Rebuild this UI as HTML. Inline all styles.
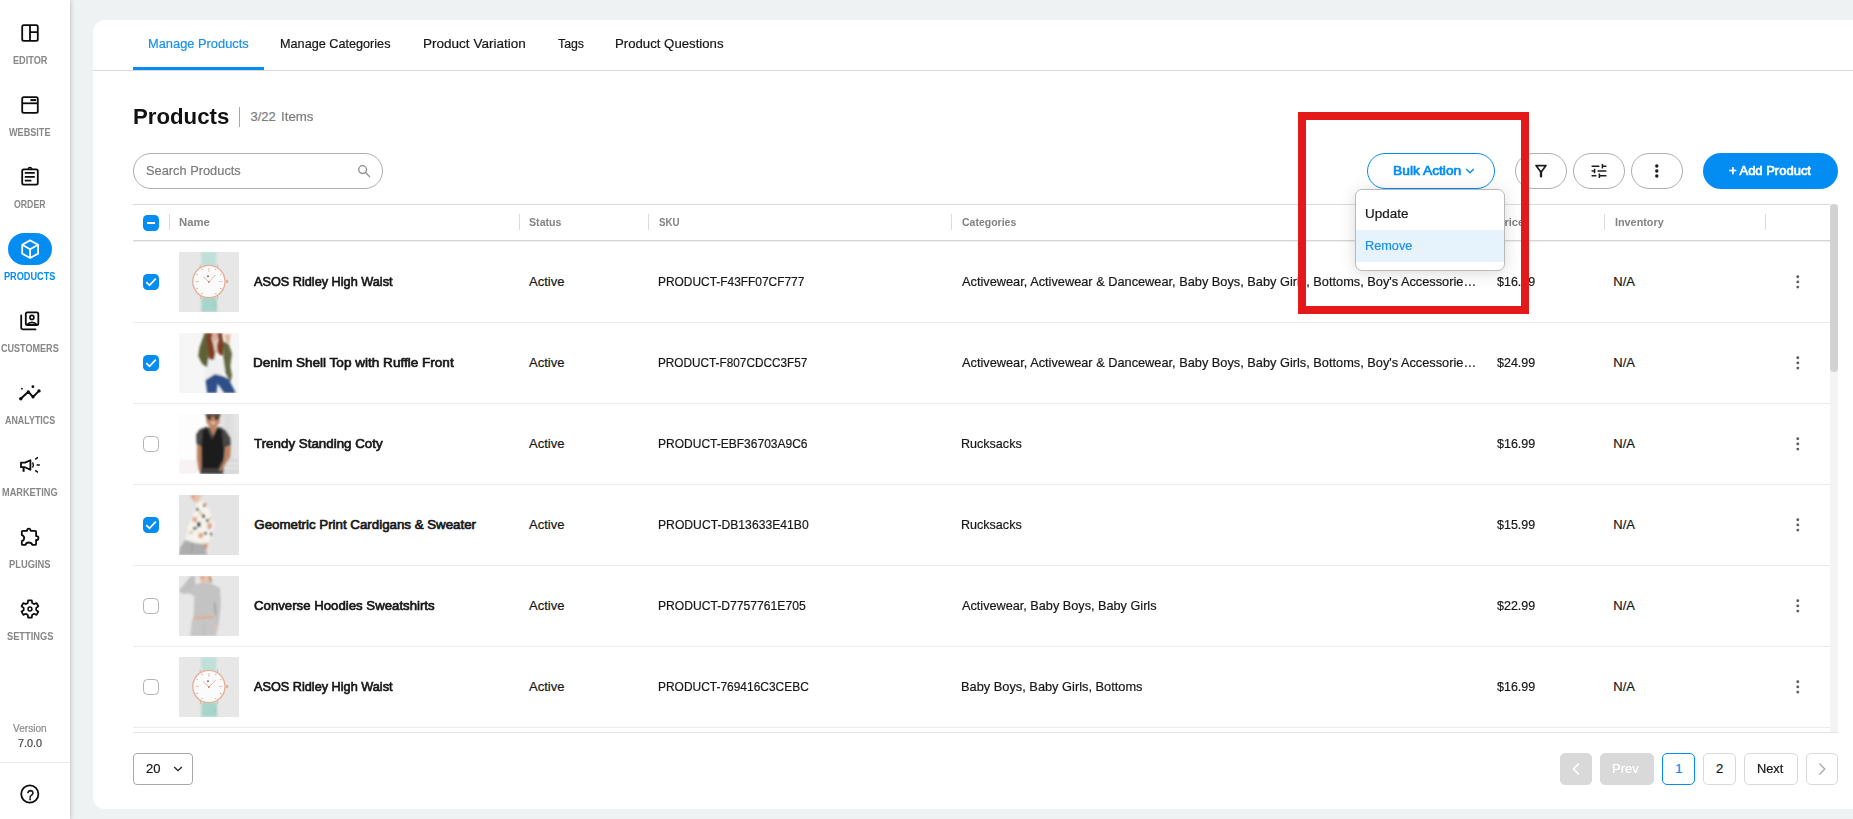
<!DOCTYPE html>
<html lang="en">
<head>
<meta charset="utf-8">
<title>Products</title>
<style>
*{box-sizing:border-box;margin:0;padding:0}
html,body{width:1853px;height:819px;overflow:hidden}
body{background:#eff2f3;font-family:"Liberation Sans",sans-serif;color:#1f1f1f;position:relative}
.a{position:absolute}
.t{position:absolute;white-space:nowrap;line-height:1;transform-origin:0 50%}
#side{position:absolute;left:0;top:0;width:70px;height:819px;background:#fff;box-shadow:1px 0 4px rgba(105,115,120,.36)}
#card{position:absolute;left:93px;top:20px;width:1780px;height:789px;background:#fff;border-radius:12px}
.hl{position:absolute;height:1px;left:133px;width:1697px}
.vs{position:absolute;width:1px;top:214px;height:16px;background:#dbdbdb}
.cb{position:absolute;left:143px;width:16px;height:16px;border-radius:4.5px}
.cb.on{background:#038cf2}
.cb.off{background:#fff;border:1px solid #b2b2b2}
.pill{position:absolute;top:153px;height:36px;border-radius:18px;border:1px solid #adadad;background:#fff}
.pg{position:absolute;top:753px;height:32px;border-radius:5px;border:1px solid #dadada;background:#fff}
.img{position:absolute;left:179px;width:60px;height:60px;overflow:hidden}
.img svg{position:static;display:block;overflow:hidden}
svg{position:absolute;overflow:visible}
</style>
</head>
<body>
<div id="card"></div>
<div class="a" style="left:93px;top:70px;width:1760px;height:1px;background:#d9d9d9"></div>
<div class="a" style="left:133px;top:67px;width:131px;height:3px;background:#038cf2"></div>
<span class="t" style="left:147.51px;top:36.6px;font-size:13px;color:#1890ee;-webkit-text-stroke:.2px;transform:scaleX(0.9882)">Manage Products</span>
<span class="t" style="left:280.33px;top:36.6px;font-size:13px;color:#171717;-webkit-text-stroke:.2px;transform:scaleX(0.9738)">Manage Categories</span>
<span class="t" style="left:422.56px;top:36.6px;font-size:13px;color:#171717;-webkit-text-stroke:.2px;transform:scaleX(1.0407)">Product Variation</span>
<span class="t" style="left:557.5px;top:36.6px;font-size:13px;color:#171717;-webkit-text-stroke:.2px;transform:scaleX(0.9478)">Tags</span>
<span class="t" style="left:614.99px;top:36.6px;font-size:13px;color:#171717;-webkit-text-stroke:.2px;transform:scaleX(1.0146)">Product Questions</span>
<span class="t" style="left:132.79px;top:105.88px;font-size:22px;color:#111;font-weight:bold;transform:scaleX(1.0094)">Products</span>
<div class="a" style="left:239px;top:107px;width:1px;height:20px;background:#a8a8a8"></div>
<span class="t" style="left:250.5px;top:110px;font-size:13px;color:#7b7b7b;-webkit-text-stroke:.2px">3/22</span>
<span class="t" style="left:280.98px;top:110px;font-size:13px;color:#7b7b7b;-webkit-text-stroke:.2px;transform:scaleX(1.0229)">Items</span>
<div class="pill" style="left:133px;width:250px"></div>
<span class="t" style="left:146px;top:163.57px;font-size:13.5px;color:#7a7a7a;-webkit-text-stroke:.2px;transform:scaleX(0.9495)">Search Products</span>
<svg class="a" style="left:357px;top:164px" width="14" height="14" viewBox="0 0 14 14" fill="none" stroke="#8a8a8a" stroke-width="1.3"><circle cx="5.6" cy="5.6" r="3.9"/><path d="M8.5 8.5L12.6 12.6" stroke-linecap="round"/></svg>
<div class="pill" style="left:1367px;width:128px;border:1.5px solid #038cf2"></div>
<span class="t" style="left:1392.76px;top:163.74px;font-size:13.3px;color:#038cf2;-webkit-text-stroke:0.67px;transform:scaleX(1.0381)">Bulk Action</span>
<svg class="a" style="left:1464px;top:166px" width="12" height="10" viewBox="0 0 12 10" fill="none" stroke="#038cf2" stroke-width="1.3"><path d="M2.2 3L6 6.8L9.8 3"/></svg>
<div class="pill" style="left:1515px;width:52px"></div>
<div class="pill" style="left:1573px;width:52px"></div>
<div class="pill" style="left:1631px;width:52px"></div>
<svg class="a" style="left:1531px;top:161px" width="20" height="20" viewBox="0 0 20 20" fill="none" stroke="#1c1c1c"><path d="M5 4.6H15L10 11.2Z" stroke-width="1.7" stroke-linejoin="round"/><path d="M10 11V15.4" stroke-width="2.3" stroke-linecap="round"/></svg>
<svg class="a" style="left:1589px;top:161px" width="20" height="20" viewBox="0 0 20 20" fill="none" stroke="#1c1c1c" stroke-width="1.5"><path d="M2.6 5.2H10.4M13.4 5.2H17.4M13.4 2.9V7.5M2.6 10H5.6M8.6 10H17.4M5.6 7.7V12.3M2.6 14.8H7.4M10.4 14.8H17.4M10.4 12.5V17.1"/></svg>
<svg class="a" style="left:1647px;top:161px" width="20" height="20" viewBox="0 0 20 20" fill="#1c1c1c"><circle cx="9.8" cy="5" r="1.7"/><circle cx="9.8" cy="10" r="1.7"/><circle cx="9.8" cy="15" r="1.7"/></svg>
<div class="a" style="left:1703px;top:153px;width:135px;height:36px;border-radius:18px;background:#038cf2"></div>
<span class="t" style="left:1729px;top:163.74px;font-size:13.3px;color:#fff;-webkit-text-stroke:0.67px;transform:scaleX(0.9771)">+ Add Product</span>
<svg class="a" width="0" height="0" style="left:0;top:0"><defs><filter id="bl" x="-5%" y="-5%" width="110%" height="110%"><feGaussianBlur stdDeviation=".8"/></filter></defs></svg>
<div class="hl" style="top:204px;background:#dadada"></div>
<div class="hl" style="top:240px;background:#d6d6d6;box-shadow:0 1px 1px rgba(0,0,0,.08)"></div>
<div class="cb on" style="top:215px"></div><div class="a" style="left:147px;top:222px;width:8px;height:2px;background:#fff"></div>
<div class="vs" style="left:169px"></div>
<div class="vs" style="left:519px"></div>
<div class="vs" style="left:648px"></div>
<div class="vs" style="left:951px"></div>
<div class="vs" style="left:1487px"></div>
<div class="vs" style="left:1604px"></div>
<div class="vs" style="left:1765px"></div>
<span class="t" style="left:179px;top:216.82px;font-size:11.2px;color:#828282;font-weight:bold;transform:scaleX(1.0083)">Name</span>
<span class="t" style="left:529.1px;top:216.82px;font-size:11.2px;color:#828282;font-weight:bold;transform:scaleX(0.9509)">Status</span>
<span class="t" style="left:658.8px;top:216.82px;font-size:11.2px;color:#828282;font-weight:bold;transform:scaleX(0.8708)">SKU</span>
<span class="t" style="left:961.5px;top:216.82px;font-size:11.2px;color:#828282;font-weight:bold;transform:scaleX(0.9392)">Categories</span>
<span class="t" style="left:1497px;top:216.82px;font-size:11.2px;color:#828282;font-weight:bold;transform:scaleX(0.9946)">Price</span>
<span class="t" style="left:1614.6px;top:216.82px;font-size:11.2px;color:#828282;font-weight:bold;transform:scaleX(0.9661)">Inventory</span>
<div class="hl" style="top:322px;background:#e8ecec"></div>
<div class="cb on" style="top:274px"></div><svg class="a" style="left:143px;top:274px" width="16" height="16" viewBox="0 0 16 16" fill="none" stroke="#fff" stroke-width="1.7"><path d="M3.300 8.100L6.500 11.300L12.800 4.600"/></svg>
<div class="img" style="top:252px"><svg width="60" height="60" viewBox="0 0 60 60"><rect width="60" height="60" fill="#e7e7e7"/><g filter="url(#bl)"><path d="M21.8 0H37.6L37.2 14H22.6Z" fill="#bfe0d8"/><path d="M22.4 45H37.8L38.2 60H22.2Z" fill="#a8d5cb"/><path d="M36 50V57" stroke="#8bbfb5" stroke-width=".8"/></g><rect x="47" y="28" width="2.2" height="3" rx=".8" fill="#dcae98"/><path d="M21.2 12.500V17M38.600 12.500V17M21.400 42V47M38.600 42V47" stroke="#e3b29c" stroke-width="1"/><circle cx="29.9" cy="29.5" r="16.8" fill="#e4b096"/><circle cx="29.9" cy="29.5" r="15.4" fill="#fbfbfb"/><path d="M29.9 30L24 24.5M29.9 30L36.5 23" stroke="#d9a58e" stroke-width=".8"/><path d="M29.9 16V20M16.5 29.5H20M40 29.5H43.5" stroke="#e3b49f" stroke-width=".8"/><rect x="28" y="23.6" width="2" height="1.2" fill="#555"/><rect x="29.1" y="29" width="1.6" height="2" fill="#c98f78"/><g fill="#b58a7c"><circle cx="36.8" cy="17.5" r=".6"/><circle cx="41.8" cy="22.6" r=".6"/><circle cx="41.8" cy="36.4" r=".6"/><circle cx="36.8" cy="41.5" r=".6"/><circle cx="23" cy="41.5" r=".6"/><circle cx="18" cy="36.4" r=".6"/><circle cx="18" cy="22.6" r=".6"/><circle cx="23" cy="17.5" r=".6"/></g></svg></div>
<span class="t" style="left:254.3px;top:274.74px;font-size:13.3px;color:#161616;-webkit-text-stroke:0.67px;transform:scaleX(0.9547)">ASOS Ridley High Waist</span>
<span class="t" style="left:529px;top:275px;font-size:13px;color:#171717;-webkit-text-stroke:.2px">Active</span>
<span class="t" style="left:657.98px;top:275px;font-size:13px;color:#171717;-webkit-text-stroke:.2px;transform:scaleX(0.9166)">PRODUCT-F43FF07CF777</span>
<span class="t" style="left:961.7px;top:275px;font-size:13px;color:#171717;-webkit-text-stroke:.2px;transform:scaleX(0.9823)">Activewear, Activewear &amp; Dancewear, Baby Boys, Baby Girls, Bottoms, Boy's Accessorie…</span>
<span class="t" style="left:1497px;top:275px;font-size:13px;color:#171717;-webkit-text-stroke:.2px;transform:scaleX(0.9613)">$16.99</span>
<span class="t" style="left:1613.3px;top:275px;font-size:13px;color:#171717;-webkit-text-stroke:.2px">N/A</span>
<svg class="a" style="left:1789px;top:273px" width="18" height="18" viewBox="0 0 18 18" fill="#5e5e5e"><circle cx="8.800" cy="3.700" r="1.450"/><circle cx="8.800" cy="8.900" r="1.450"/><circle cx="8.800" cy="14.100" r="1.450"/></svg>
<div class="hl" style="top:403px;background:#e8ecec"></div>
<div class="cb on" style="top:355px"></div><svg class="a" style="left:143px;top:355px" width="16" height="16" viewBox="0 0 16 16" fill="none" stroke="#fff" stroke-width="1.7"><path d="M3.300 8.100L6.500 11.300L12.800 4.600"/></svg>
<div class="img" style="top:333px"><svg width="60" height="60" viewBox="0 0 60 60"><rect width="60" height="60" fill="#f6f6f6"/><g filter="url(#bl)"><path d="M45 1.5L51.5 1L50.5 10.5L47 9Z" fill="#e3b8a2"/><path d="M25.6 0L20.5 14.5L19.2 23L23 30.8L29 35L29.5 20.5L30 7.7L28 0Z" fill="#5e6239"/><path d="M42.7 7.7L49.6 11.1L53 20.5L51.3 33.3L53 42.7L51.3 49.6L45.3 37.6L44.4 27.4L44.4 16.2Z" fill="#646840"/><path d="M29 27.4L35 22.5L44.4 27L46.2 37.6L42.7 42.7L35.9 41L26.5 47L24.8 41L28.2 34.2Z" fill="#f0f0f0"/><path d="M32.5 0H39.5L38.5 6.8L35.9 10.3L33.3 6.8Z" fill="#dcae98"/><path d="M33 8L38.8 8L39.5 19L35.9 22Z" fill="#e8cdbf"/><path d="M28.2 0H33.500L32.500 6L34 10L36 20L35 27L31 26.500L29.500 24L28.500 12L27.400 5Z" fill="#7e3d24"/><path d="M38.500 0H43L44.600 12L44 22.500L41 22L38.500 19L38 12L39.500 7Z" fill="#7e3d24"/><path d="M26.500 47L35.900 41L42.700 42.700L49.600 46.200L56.400 59L56.400 60H45.300L38.500 50.400L37.600 60H28.200Z" fill="#2f5088"/></g></svg></div>
<span class="t" style="left:253.28px;top:355.74px;font-size:13.3px;color:#161616;-webkit-text-stroke:0.67px;transform:scaleX(1.0194)">Denim Shell Top with Ruffle Front</span>
<span class="t" style="left:529px;top:356px;font-size:13px;color:#171717;-webkit-text-stroke:.2px">Active</span>
<span class="t" style="left:657.99px;top:356px;font-size:13px;color:#171717;-webkit-text-stroke:.2px;transform:scaleX(0.9066)">PRODUCT-F807CDCC3F57</span>
<span class="t" style="left:961.7px;top:356px;font-size:13px;color:#171717;-webkit-text-stroke:.2px;transform:scaleX(0.9823)">Activewear, Activewear &amp; Dancewear, Baby Boys, Baby Girls, Bottoms, Boy's Accessorie…</span>
<span class="t" style="left:1497px;top:356px;font-size:13px;color:#171717;-webkit-text-stroke:.2px;transform:scaleX(0.9613)">$24.99</span>
<span class="t" style="left:1613.3px;top:356px;font-size:13px;color:#171717;-webkit-text-stroke:.2px">N/A</span>
<svg class="a" style="left:1789px;top:354px" width="18" height="18" viewBox="0 0 18 18" fill="#5e5e5e"><circle cx="8.800" cy="3.700" r="1.450"/><circle cx="8.800" cy="8.900" r="1.450"/><circle cx="8.800" cy="14.100" r="1.450"/></svg>
<div class="hl" style="top:484px;background:#e8ecec"></div>
<div class="cb off" style="top:436px"></div>
<div class="img" style="top:414px"><svg width="60" height="60" viewBox="0 0 60 60"><defs><linearGradient id="mg" x1="0" x2="1" y1="0" y2="0"><stop offset=".45" stop-color="#fdfdfd"/><stop offset=".8" stop-color="#dcdcdc"/><stop offset="1" stop-color="#e6e6e6"/></linearGradient></defs><rect width="60" height="60" fill="url(#mg)"/><g filter="url(#bl)"><rect x="0" y="46" width="18" height="14" fill="#f7f2f3"/><rect x="45" y="45" width="15" height="15" fill="#d8d8d8"/><path d="M45 49.500H60M45 54H60" stroke="#f2f2f2" stroke-width="1"/><path d="M27 0H41L40.500 9L37 13H31L27.500 9Z" fill="#c48a68"/><path d="M26.500 0H41.500V2H26.500Z" fill="#2a2220"/><path d="M27.500 2.500H33L32 6H28.500ZM35 2.500H40.500L39.500 6H36Z" fill="#33302f"/><path d="M31.500 8.500H37L34 10.300Z" fill="#f4ece8"/><path d="M29.500 10L38.500 10L34 24Z" fill="#bf8463"/><path d="M20.500 15.400L27.400 12.800L31 14L34 22L38 13L42 13.500L46.200 16.200L51.300 24L51.700 31.600L46.200 33.300L45.300 46.200L44.400 60H21.400L22.200 33.300L17.500 30L17.100 20.500Z" fill="#474747"/><path d="M24 15.400L28 14L33 26L38 14.500L42.700 15.400L45.300 42.700L39.300 54.700L23 54.700L22.200 33.300Z" fill="#1f1f1f"/><path d="M17.900 30.800L22.200 32.500L22.200 54.700L19.700 58.100L17.900 46.200Z" fill="#bd815f"/><path d="M46.200 33.300L51.700 32L51.300 42.700L42.700 56.400L39.300 58.100L45.300 46.200Z" fill="#bd815f"/><path d="M21.400 56H40L44 60H21.400Z" fill="#3d3d3d"/></g></svg></div>
<span class="t" style="left:254.3px;top:436.74px;font-size:13.3px;color:#161616;-webkit-text-stroke:0.67px;transform:scaleX(1.0042)">Trendy Standing Coty</span>
<span class="t" style="left:529px;top:437px;font-size:13px;color:#171717;-webkit-text-stroke:.2px">Active</span>
<span class="t" style="left:657.98px;top:437px;font-size:13px;color:#171717;-webkit-text-stroke:.2px;transform:scaleX(0.9240)">PRODUCT-EBF36703A9C6</span>
<span class="t" style="left:960.73px;top:437px;font-size:13px;color:#171717;-webkit-text-stroke:.2px;transform:scaleX(0.9655)">Rucksacks</span>
<span class="t" style="left:1497px;top:437px;font-size:13px;color:#171717;-webkit-text-stroke:.2px;transform:scaleX(0.9613)">$16.99</span>
<span class="t" style="left:1613.3px;top:437px;font-size:13px;color:#171717;-webkit-text-stroke:.2px">N/A</span>
<svg class="a" style="left:1789px;top:435px" width="18" height="18" viewBox="0 0 18 18" fill="#5e5e5e"><circle cx="8.800" cy="3.700" r="1.450"/><circle cx="8.800" cy="8.900" r="1.450"/><circle cx="8.800" cy="14.100" r="1.450"/></svg>
<div class="hl" style="top:565px;background:#e8ecec"></div>
<div class="cb on" style="top:517px"></div><svg class="a" style="left:143px;top:517px" width="16" height="16" viewBox="0 0 16 16" fill="none" stroke="#fff" stroke-width="1.7"><path d="M3.300 8.100L6.500 11.300L12.800 4.600"/></svg>
<div class="img" style="top:495px"><svg width="60" height="60" viewBox="0 0 60 60"><rect width="60" height="60" fill="#e4e4e4"/><g filter="url(#bl)"><path d="M10.300 0H23L18.800 7.700L14.500 6.800Z" fill="#e6c0aa"/><circle cx="14.300" cy="1.800" r="1" fill="#c9452f"/><path d="M18.800 6.800L25.600 6L30.800 16.200L35.900 30.800L32.500 41L29 47.900L15.400 47.900L6.800 44.400L8.500 33.300L13.700 20.500Z" fill="#f5f3ec"/><g fill="#3b3a38"><rect x="17" y="13" width="2.500" height="3"/><rect x="24" y="9" width="3" height="2.500"/><rect x="23" y="19.500" width="3" height="3.500"/><rect x="18" y="27" width="3.500" height="5"/><rect x="27" y="24" width="2.500" height="3"/><rect x="14" y="32" width="3.500" height="2.500"/><rect x="25" y="37" width="3" height="2.500"/><rect x="29" y="30" width="2" height="4"/><rect x="31" y="37.500" width="2" height="3"/></g><g fill="#e5a78a"><rect x="13.500" y="22" width="4.500" height="5"/><rect x="28.500" y="28" width="4.500" height="5"/><rect x="19.500" y="38" width="4.500" height="5"/><rect x="24.500" y="7.500" width="3" height="3"/></g><g fill="#d9d2a6"><rect x="20" y="16" width="3" height="4"/><rect x="10" y="36" width="4" height="3"/><rect x="30" y="22" width="2.500" height="3"/></g><path d="M23 47.500L30 47.500L30.500 55L25.500 54Z" fill="#efe4dc"/><path d="M25 48.500L28 53.500M28.500 48.500L25.500 53.500" stroke="#d0553a" stroke-width="1.100"/><path d="M6 45L16.200 47.900L25.600 49.600L28.200 60H0L0.900 53Z" fill="#adadad"/><path d="M14 48L12 60" stroke="#9b9b9b" stroke-width="1"/></g></svg></div>
<span class="t" style="left:254.3px;top:517.74px;font-size:13.3px;color:#161616;-webkit-text-stroke:0.67px">Geometric Print Cardigans &amp; Sweater</span>
<span class="t" style="left:529px;top:518px;font-size:13px;color:#171717;-webkit-text-stroke:.2px">Active</span>
<span class="t" style="left:657.97px;top:518px;font-size:13px;color:#171717;-webkit-text-stroke:.2px;transform:scaleX(0.9350)">PRODUCT-DB13633E41B0</span>
<span class="t" style="left:960.73px;top:518px;font-size:13px;color:#171717;-webkit-text-stroke:.2px;transform:scaleX(0.9655)">Rucksacks</span>
<span class="t" style="left:1497px;top:518px;font-size:13px;color:#171717;-webkit-text-stroke:.2px;transform:scaleX(0.9613)">$15.99</span>
<span class="t" style="left:1613.3px;top:518px;font-size:13px;color:#171717;-webkit-text-stroke:.2px">N/A</span>
<svg class="a" style="left:1789px;top:516px" width="18" height="18" viewBox="0 0 18 18" fill="#5e5e5e"><circle cx="8.800" cy="3.700" r="1.450"/><circle cx="8.800" cy="8.900" r="1.450"/><circle cx="8.800" cy="14.100" r="1.450"/></svg>
<div class="hl" style="top:646px;background:#e8ecec"></div>
<div class="cb off" style="top:598px"></div>
<div class="img" style="top:576px"><svg width="60" height="60" viewBox="0 0 60 60"><rect width="60" height="60" fill="#e7e7e7"/><g filter="url(#bl)"><path d="M19.700 0H30.800L29.900 7.700H22.200Z" fill="#e7c3af"/><path d="M29.500 0H31.500L33 6L31 7Z" fill="#b78a5c"/><circle cx="23.600" cy="1.500" r=".9" fill="#c9402f"/><path d="M0 14.500L12 0H16.200L16.200 9.400L12 17.100L3.400 18Z" fill="#c0c0c0"/><path d="M15.400 8.500L24 6.800L32.500 7.700L41 12L41.900 29L39.300 50.400L35.900 50.400L35 39.300L14.500 41L15.400 20.500L10 17Z" fill="#c3c3c3"/><path d="M35.500 26L36.500 39" stroke="#8a8a8a" stroke-width="1"/><path d="M14.500 40.800L35 39.500L35 42.700L14.500 43.200Z" fill="#d7ad92"/><path d="M13.200 43L36 42.700L37.600 60H11.100Z" fill="#c6c6c6"/><path d="M25 47L24.500 60" stroke="#b0b0b0" stroke-width=".8"/><path d="M36.500 50L39 50.500L38.500 56L36.800 56Z" fill="#e4c2ae"/></g></svg></div>
<span class="t" style="left:254.3px;top:598.74px;font-size:13.3px;color:#161616;-webkit-text-stroke:0.67px;transform:scaleX(0.9936)">Converse Hoodies Sweatshirts</span>
<span class="t" style="left:529px;top:599px;font-size:13px;color:#171717;-webkit-text-stroke:.2px">Active</span>
<span class="t" style="left:657.97px;top:599px;font-size:13px;color:#171717;-webkit-text-stroke:.2px;transform:scaleX(0.9330)">PRODUCT-D7757761E705</span>
<span class="t" style="left:961.7px;top:599px;font-size:13px;color:#171717;-webkit-text-stroke:.2px;transform:scaleX(0.9754)">Activewear, Baby Boys, Baby Girls</span>
<span class="t" style="left:1497px;top:599px;font-size:13px;color:#171717;-webkit-text-stroke:.2px;transform:scaleX(0.9613)">$22.99</span>
<span class="t" style="left:1613.3px;top:599px;font-size:13px;color:#171717;-webkit-text-stroke:.2px">N/A</span>
<svg class="a" style="left:1789px;top:597px" width="18" height="18" viewBox="0 0 18 18" fill="#5e5e5e"><circle cx="8.800" cy="3.700" r="1.450"/><circle cx="8.800" cy="8.900" r="1.450"/><circle cx="8.800" cy="14.100" r="1.450"/></svg>
<div class="hl" style="top:727px;background:#e8ecec"></div>
<div class="cb off" style="top:679px"></div>
<div class="img" style="top:657px"><svg width="60" height="60" viewBox="0 0 60 60"><rect width="60" height="60" fill="#e7e7e7"/><g filter="url(#bl)"><path d="M21.8 0H37.6L37.2 14H22.6Z" fill="#bfe0d8"/><path d="M22.4 45H37.8L38.2 60H22.2Z" fill="#a8d5cb"/><path d="M36 50V57" stroke="#8bbfb5" stroke-width=".8"/></g><rect x="47" y="28" width="2.2" height="3" rx=".8" fill="#dcae98"/><path d="M21.2 12.500V17M38.600 12.500V17M21.400 42V47M38.600 42V47" stroke="#e3b29c" stroke-width="1"/><circle cx="29.9" cy="29.5" r="16.8" fill="#e4b096"/><circle cx="29.9" cy="29.5" r="15.4" fill="#fbfbfb"/><path d="M29.9 30L24 24.5M29.9 30L36.5 23" stroke="#d9a58e" stroke-width=".8"/><path d="M29.9 16V20M16.5 29.5H20M40 29.5H43.5" stroke="#e3b49f" stroke-width=".8"/><rect x="28" y="23.6" width="2" height="1.2" fill="#555"/><rect x="29.1" y="29" width="1.6" height="2" fill="#c98f78"/><g fill="#b58a7c"><circle cx="36.8" cy="17.5" r=".6"/><circle cx="41.8" cy="22.6" r=".6"/><circle cx="41.8" cy="36.4" r=".6"/><circle cx="36.8" cy="41.5" r=".6"/><circle cx="23" cy="41.5" r=".6"/><circle cx="18" cy="36.4" r=".6"/><circle cx="18" cy="22.6" r=".6"/><circle cx="23" cy="17.5" r=".6"/></g></svg></div>
<span class="t" style="left:254.3px;top:679.74px;font-size:13.3px;color:#161616;-webkit-text-stroke:0.67px;transform:scaleX(0.9547)">ASOS Ridley High Waist</span>
<span class="t" style="left:529px;top:680px;font-size:13px;color:#171717;-webkit-text-stroke:.2px">Active</span>
<span class="t" style="left:657.98px;top:680px;font-size:13px;color:#171717;-webkit-text-stroke:.2px;transform:scaleX(0.9193)">PRODUCT-769416C3CEBC</span>
<span class="t" style="left:960.71px;top:680px;font-size:13px;color:#171717;-webkit-text-stroke:.2px;transform:scaleX(0.9851)">Baby Boys, Baby Girls, Bottoms</span>
<span class="t" style="left:1497px;top:680px;font-size:13px;color:#171717;-webkit-text-stroke:.2px;transform:scaleX(0.9613)">$16.99</span>
<span class="t" style="left:1613.3px;top:680px;font-size:13px;color:#171717;-webkit-text-stroke:.2px">N/A</span>
<svg class="a" style="left:1789px;top:678px" width="18" height="18" viewBox="0 0 18 18" fill="#5e5e5e"><circle cx="8.800" cy="3.700" r="1.450"/><circle cx="8.800" cy="8.900" r="1.450"/><circle cx="8.800" cy="14.100" r="1.450"/></svg>
<div class="hl" style="top:732px;width:1705px;background:#e2e2e2"></div>
<div class="a" style="left:1830px;top:204px;width:8px;height:528px;background:#f4f4f4"></div>
<div class="a" style="left:1830px;top:204px;width:8px;height:168px;border-radius:4px;background:#d3d2d3"></div>
<div class="pg" style="left:133px;width:60px;border-color:#a9a9a9;border-radius:4px"></div>
<span class="t" style="left:146.3px;top:762.4px;font-size:13px;color:#171717;-webkit-text-stroke:.2px;transform:scaleX(1.0049)">20</span>
<svg class="a" style="left:172px;top:764px" width="12" height="10" viewBox="0 0 12 10" fill="none" stroke="#1f1f1f" stroke-width="1.300"><path d="M2.200 3L6 6.600L9.800 3"/></svg>
<div class="pg" style="left:1560px;width:32px;background:#d9d9d9;border-color:#d9d9d9"></div>
<svg class="a" style="left:1568px;top:761px" width="16" height="16" viewBox="0 0 16 16" fill="none" stroke="#fff" stroke-width="1.500"><path d="M10.800 2.600L5.400 8L10.800 13.400"/></svg>
<div class="pg" style="left:1600px;width:54px;background:#d9d9d9;border-color:#d9d9d9"></div>
<span class="t" style="left:1612.4px;top:762px;font-size:13px;color:#ffffff;-webkit-text-stroke:.2px;transform:scaleX(0.9950)">Prev</span>
<div class="pg" style="left:1662px;width:33px;border-color:#038cf2"></div>
<span class="t" style="left:1675.3px;top:762px;font-size:13px;color:#038cf2;-webkit-text-stroke:.2px">1</span>
<div class="pg" style="left:1703px;width:33px"></div>
<span class="t" style="left:1715.9px;top:762px;font-size:13px;color:#171717;-webkit-text-stroke:.2px">2</span>
<div class="pg" style="left:1744px;width:54px"></div>
<span class="t" style="left:1756.62px;top:762px;font-size:13px;color:#171717;-webkit-text-stroke:.2px;transform:scaleX(0.9840)">Next</span>
<div class="pg" style="left:1806px;width:32px"></div>
<svg class="a" style="left:1814px;top:761px" width="16" height="16" viewBox="0 0 16 16" fill="none" stroke="#ababab" stroke-width="1.400"><path d="M5.400 2.600L10.800 8L5.400 13.400"/></svg>
<div class="a" style="left:1355px;top:189px;width:150px;height:82px;border-radius:7px;border:1px solid #b9b9b9;background:#fff;box-shadow:0 2px 16px rgba(0,0,0,.15)"></div>
<div class="a" style="left:1356px;top:230px;width:148px;height:32px;background:#e6f3fd"></div>
<span class="t" style="left:1365.27px;top:207px;font-size:13px;color:#171717;-webkit-text-stroke:.2px;transform:scaleX(1.0347)">Update</span>
<span class="t" style="left:1365.32px;top:239px;font-size:13px;color:#1890ee;-webkit-text-stroke:.2px;transform:scaleX(0.9772)">Remove</span>
<div class="a" style="left:1298px;top:112px;width:231px;height:202px;border:8px solid #e41a1a"></div>
<div id="side">
<div class="a" style="left:8px;top:233px;width:44px;height:32px;border-radius:16px;background:#038cf2"></div>
<svg class="a" style="left:0;top:0" width="70" height="819" viewBox="0 0 70 819" fill="none" stroke="#0c0c0c" stroke-width="1.8" stroke-linejoin="round" stroke-linecap="butt">
<rect x="22.2" y="25.2" width="15.6" height="15.6" rx="1.6"/><path d="M30 25.2V40.8M30 32.2H37.8"/>
<rect x="22.2" y="97.2" width="15.6" height="15.6" rx="1.6"/><path d="M22.2 103.3H37.8"/><path d="M30.4 100.1H36.2" stroke-width="2"/>
<rect x="22.2" y="169.3" width="15.6" height="15.4" rx="1.6"/><path d="M28.2 169.3a1.8 1.8 0 0 1 3.6 0" stroke-width="1.4"/><path d="M24.8 172.9H34.8M24.8 176.8H34.8M24.8 180.7H31.4" stroke-width="1.8"/>
<g stroke="#fff"><path d="M30.1 240.4L38.1 244.8V253.6L30.1 258L22.2 253.6V244.8Z"/><path d="M22.2 244.8L30.1 249.3L38.1 244.8M30.1 249.3V258"/></g>
<rect x="25.8" y="312.4" width="12.5" height="12.6" rx="1.6"/><path d="M21.2 315.3V327.8a1.6 1.6 0 0 0 1.6 1.6H35.5" stroke-linecap="round"/><circle cx="31.9" cy="317.4" r="2" stroke-width="1.6"/><path d="M26.8 324.9Q31.9 319.9 37.2 324.9" stroke-width="1.7"/>
<path d="M20.8 398.8L28.3 391.7L33 397L39 390.9" stroke-width="1.9"/><g fill="#0c0c0c" stroke="none"><circle cx="20.8" cy="398.8" r="1.7"/><circle cx="28.3" cy="391.7" r="1.5"/><circle cx="33" cy="397" r="1.5"/><circle cx="39" cy="390.9" r="1.7"/><circle cx="21.9" cy="388.7" r="0.9"/><circle cx="32.9" cy="386.7" r="1.4"/></g>
<path d="M21 462.6H25L30.4 460.2V469.8L25 467.2H21Z"/><path d="M23.6 467.2V471.8" stroke-width="2"/><path d="M32.6 462.3Q34.2 465 32.6 467.7" stroke-width="1.4"/><path d="M36.6 465H39.8M35.2 459.4L37.9 457.4M35.2 470.4L37.9 472.4" stroke-width="1.4"/>
<path stroke-width="1.8" d="M22.8 530.8H27.1C27.1 529.6 27.6 528.6 28.8 528.6C30 528.6 30.5 529.6 30.6 530.8H35.1Q36.1 530.8 36.1 531.8V536.1H36.9C37.9 536.1 38.4 537 38.4 538C38.4 539.1 37.9 540 36.9 540H36.1V543.9Q36.1 544.9 35.1 544.9H32.4C32 543.6 30.8 542.5 28.7 542.5C26.8 542.5 25.8 543.6 25.4 544.9H22.8Q21.8 544.9 21.8 543.9V541.2C23.2 540.7 24.2 539.5 24.2 538C24.2 536.6 23.2 535.5 21.8 535.1V531.8Q21.800 530.8 22.8 530.8Z"/>
<path d="M32.12 602.98 L31.79 600.29 L28.11 600.29 L27.78 602.98 L25.87 604.09 L23.37 603.03 L21.53 606.22 L23.70 607.85 L23.70 610.05 L21.53 611.68 L23.37 614.87 L25.87 613.81 L27.78 614.92 L28.11 617.61 L31.79 617.61 L32.12 614.92 L34.03 613.81 L36.53 614.87 L38.37 611.68 L36.20 610.05 L36.20 607.85 L38.37 606.22 L36.53 603.03 L34.03 604.09Z" stroke-width="1.75"/><circle cx="29.95" cy="608.95" r="1.95" stroke-width="1.5"/>
<circle cx="29.8" cy="794" r="8.6"/>
</svg>
<div class="a" style="left:0;top:762px;width:70px;height:1px;background:#e6eaec"></div>
<span class="t" style="left:12.6px;top:55.68px;font-size:10.3px;color:#878787;font-weight:bold;transform:scaleX(0.8911)">EDITOR</span>
<span class="t" style="left:9.3px;top:127.68px;font-size:10.3px;color:#878787;font-weight:bold;transform:scaleX(0.8843)">WEBSITE</span>
<span class="t" style="left:14.1px;top:199.68px;font-size:10.3px;color:#878787;font-weight:bold;transform:scaleX(0.8477)">ORDER</span>
<span class="t" style="left:4.35px;top:271.68px;font-size:10.3px;color:#038cf2;font-weight:bold;transform:scaleX(0.8893)">PRODUCTS</span>
<span class="t" style="left:1.2px;top:343.68px;font-size:10.3px;color:#878787;font-weight:bold;transform:scaleX(0.8793)">CUSTOMERS</span>
<span class="t" style="left:4.95px;top:415.68px;font-size:10.3px;color:#878787;font-weight:bold;transform:scaleX(0.8656)">ANALYTICS</span>
<span class="t" style="left:2.35px;top:487.68px;font-size:10.3px;color:#878787;font-weight:bold;transform:scaleX(0.8903)">MARKETING</span>
<span class="t" style="left:9.3px;top:559.68px;font-size:10.3px;color:#878787;font-weight:bold;transform:scaleX(0.9063)">PLUGINS</span>
<span class="t" style="left:6.85px;top:631.68px;font-size:10.3px;color:#878787;font-weight:bold;transform:scaleX(0.9008)">SETTINGS</span>
<span class="t" style="left:13.1px;top:722.91px;font-size:10.5px;color:#8a8a8a;-webkit-text-stroke:.2px;transform:scaleX(0.9607)">Version</span>
<span class="t" style="left:18.2px;top:738.29px;font-size:11px;color:#444444;-webkit-text-stroke:.2px;transform:scaleX(0.9857)">7.0.0</span>
<span class="t" style="left:26.75px;top:786.8px;font-size:15px;color:#0c0c0c;-webkit-text-stroke:0.6px;transform:scaleX(0.8125)">?</span>
</div>
</body>
</html>
